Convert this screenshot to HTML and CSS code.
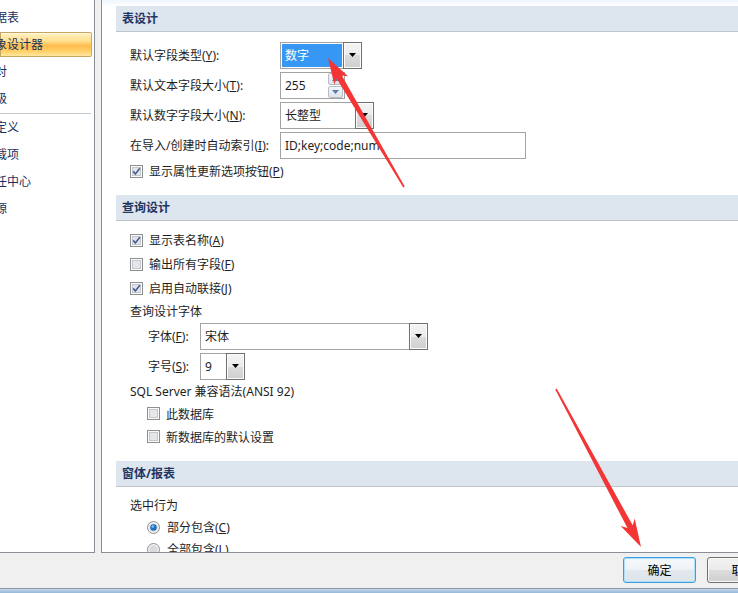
FILE: index.html
```html
<!DOCTYPE html>
<html lang="zh-CN">
<head>
    <meta charset="UTF-8">
    <title>Access 选项 - 对象设计器</title>
    <link rel="stylesheet" href="styles.css">
</head>
<body>
    <div class="main">
        <ul class="nav">
            <li>数据表</li>
            <li class="active">对象设计器</li>
            <li>校对</li>
            <li>高级</li>
            <li class="sep"></li>
            <li>自定义</li>
            <li>加载项</li>
            <li>信任中心</li>
            <li>资源</li>
        </ul>

        <div class="panel">
            <!-- 表设计 -->
            <div class="section-title">表设计</div>
            <div class="section-body sec-table">
                <div class="row">
                    <span class="lbl">默认字段类型(<u>Y</u>):</span>
                    <div class="combo w-type">
                        <span class="val selected">数字</span>
                        <span class="drop"><svg width="7" height="4" viewBox="0 0 7 4"><polygon points="0,0 7,0 3.5,4" fill="#000"/></svg></span>
                    </div>
                </div>
                <div class="row">
                    <span class="lbl">默认文本字段大小(<u>T</u>):</span>
                    <div class="combo w-spin">
                        <span class="val">255</span>
                        <span class="spin">
                            <span class="spin-btn"><svg width="7" height="4" viewBox="0 0 7 4"><polygon points="0,4 7,4 3.5,0" fill="#5b78b0"/></svg></span>
                            <span class="spin-btn"><svg width="7" height="4" viewBox="0 0 7 4"><polygon points="0,0 7,0 3.5,4" fill="#5b78b0"/></svg></span>
                        </span>
                    </div>
                </div>
                <div class="row">
                    <span class="lbl">默认数字字段大小(<u>N</u>):</span>
                    <div class="combo w-num">
                        <span class="val">长整型</span>
                        <span class="drop"><svg width="7" height="4" viewBox="0 0 7 4"><polygon points="0,0 7,0 3.5,4" fill="#000"/></svg></span>
                    </div>
                </div>
                <div class="row">
                    <span class="lbl">在导入/创建时自动索引(<u>I</u>):</span>
                    <div class="combo w-index">
                        <span class="val">ID;key;code;num</span>
                    </div>
                </div>
                <div class="row check-row">
                    <svg class="cb" viewBox="0 0 13 13"><rect x="0.5" y="0.5" width="12" height="12" fill="#fafafa" stroke="#8e8f8f"/><rect x="2.5" y="2.5" width="8" height="8" fill="#e4e6ea" stroke="#c3c7ce"/><path d="M3.2 6.4l2.2 2.6 4.4-5.8" fill="none" stroke="#4b5f93" stroke-width="1.7"/></svg>
                    <span>显示属性更新选项按钮(<u>P</u>)</span>
                </div>
            </div>

            <!-- 查询设计 -->
            <div class="section-title">查询设计</div>
            <div class="section-body sec-query">
                <div class="row check-row">
                    <svg class="cb" viewBox="0 0 13 13"><rect x="0.5" y="0.5" width="12" height="12" fill="#fafafa" stroke="#8e8f8f"/><rect x="2.5" y="2.5" width="8" height="8" fill="#e4e6ea" stroke="#c3c7ce"/><path d="M3.2 6.4l2.2 2.6 4.4-5.8" fill="none" stroke="#4b5f93" stroke-width="1.7"/></svg>
                    <span>显示表名称(<u>A</u>)</span>
                </div>
                <div class="row check-row">
                    <svg class="cb" viewBox="0 0 13 13"><rect x="0.5" y="0.5" width="12" height="12" fill="#fafafa" stroke="#8e8f8f"/><rect x="2.5" y="2.5" width="8" height="8" fill="#e4e6ea" stroke="#c3c7ce"/></svg>
                    <span>输出所有字段(<u>F</u>)</span>
                </div>
                <div class="row check-row">
                    <svg class="cb" viewBox="0 0 13 13"><rect x="0.5" y="0.5" width="12" height="12" fill="#fafafa" stroke="#8e8f8f"/><rect x="2.5" y="2.5" width="8" height="8" fill="#e4e6ea" stroke="#c3c7ce"/><path d="M3.2 6.4l2.2 2.6 4.4-5.8" fill="none" stroke="#4b5f93" stroke-width="1.7"/></svg>
                    <span>启用自动联接(<u>J</u>)</span>
                </div>
                <div class="row caption">查询设计字体</div>
                <div class="row combo-row indent">
                    <span class="lbl short">字体(<u>F</u>):</span>
                    <div class="combo w-font">
                        <span class="val">宋体</span>
                        <span class="drop"><svg width="7" height="4" viewBox="0 0 7 4"><polygon points="0,0 7,0 3.5,4" fill="#000"/></svg></span>
                    </div>
                </div>
                <div class="row combo-row indent gap-top">
                    <span class="lbl short">字号(<u>S</u>):</span>
                    <div class="combo w-size">
                        <span class="val">9</span>
                        <span class="drop"><svg width="7" height="4" viewBox="0 0 7 4"><polygon points="0,0 7,0 3.5,4" fill="#000"/></svg></span>
                    </div>
                </div>
                <div class="row caption">SQL Server 兼容语法(ANSI 92)</div>
                <div class="row check-row sub indent">
                    <svg class="cb" viewBox="0 0 13 13"><rect x="0.5" y="0.5" width="12" height="12" fill="#fafafa" stroke="#8e8f8f"/><rect x="2.5" y="2.5" width="8" height="8" fill="#e4e6ea" stroke="#c3c7ce"/></svg>
                    <span>此数据库</span>
                </div>
                <div class="row check-row sub indent">
                    <svg class="cb" viewBox="0 0 13 13"><rect x="0.5" y="0.5" width="12" height="12" fill="#fafafa" stroke="#8e8f8f"/><rect x="2.5" y="2.5" width="8" height="8" fill="#e4e6ea" stroke="#c3c7ce"/></svg>
                    <span>新数据库的默认设置</span>
                </div>
            </div>

            <!-- 窗体/报表 -->
            <div class="section-title">窗体/报表</div>
            <div class="section-body sec-form">
                <div class="row caption">选中行为</div>
                <div class="row radio-row indent">
                    <svg class="rd" viewBox="0 0 13 13"><circle cx="6.5" cy="6.5" r="6" fill="#f2f2f2" stroke="#8e8f8f"/><circle cx="6.5" cy="6.5" r="4.2" fill="#d8dadd"/><circle cx="6.5" cy="6.5" r="3.2" fill="#1b6fc0"/><circle cx="5.8" cy="5.6" r="1.3" fill="#7cc0f0"/></svg>
                    <span>部分包含(<u>C</u>)</span>
                </div>
                <div class="row radio-row indent">
                    <svg class="rd" viewBox="0 0 13 13"><circle cx="6.5" cy="6.5" r="6" fill="#f2f2f2" stroke="#8e8f8f"/><circle cx="6.5" cy="6.5" r="4.2" fill="#d8dadd"/></svg>
                    <span>全部包含(<u>L</u>)</span>
                </div>
            </div>
        </div>
    </div>

    <div class="footer">
        <button class="btn ok">确定</button>
        <button class="btn">取消</button>
    </div>
    <div class="taskbar"></div>

    <!-- red annotation arrows drawn over the screenshot -->
    <svg class="marks" width="738" height="593" viewBox="0 0 738 593">
        <polygon fill="#f43535" points="328,58 348.1,76.3 341.8,75.4 404.7,186.6 403.3,187.4 336.6,78.4 334.3,84.5"/>
        <polygon fill="#f43535" points="641,547 620.7,526.1 627.5,528.1 555.3,389.4 556.7,388.6 632.7,525.3 634.7,518.5"/>
    </svg>
</body>
</html>
```

FILE: styles.css
```css
* {
    box-sizing: border-box;
}

html, body {
    margin: 0;
    padding: 0;
}

body {
    width: 738px;
    height: 593px;
    overflow: hidden;
    position: relative;
    background: #f0f0f0;
    font-family: "Noto Sans", "Noto Sans CJK SC", sans-serif;
    font-size: 12px;
    color: #1e1e1e;
}

u {
    text-decoration: underline;
}

.main {
    display: flex;
    height: 553px;
}

/* left category list (scrolled, text cut at the left edge) */
.nav {
    width: 95px;
    flex: none;
    margin: 0;
    padding: 4px 0 0;
    list-style: none;
    background: #fff;
    border-right: 1px solid #8a8f96;
    border-bottom: 1px solid #8a8f96;
    overflow: hidden;
}

.nav li {
    height: 27px;
    line-height: 27px;
    text-indent: -17px;
    white-space: nowrap;
    color: #1b2f5c;
}

.nav li.active {
    height: 25px;
    line-height: 23px;
    margin: 1px 2px 1px 0;
    text-indent: -18px;
    border: 1px solid #c6a660;
    border-right-color: #e3a23c;
    border-radius: 0 2px 2px 0;
    background: linear-gradient(to bottom, #fff2c4 0%, #ffe08e 35%, #ffbd50 55%, #ffd06a 80%, #ffe7a0 100%);
    box-shadow: inset 0 1px 0 #fff8e0;
}

.nav li.sep {
    height: 2px;
    margin-right: 3px;
    border-bottom: 1px solid #c6cbd1;
}

/* right options panel */
.panel {
    flex: 1;
    margin-left: 6px;
    padding-top: 6px;
    background: linear-gradient(to bottom, #eef6fc 0, #fff 6px);
    border-left: 1px solid #8a8f96;
    border-bottom: 1px solid #8a8f96;
    overflow: hidden;
}

.section-title {
    margin-left: 14px;
    height: 26px;
    padding-left: 6px;
    line-height: 25px;
    background: #dde6ee;
    border-bottom: 1px solid #c1c5c9;
    font-weight: bold;
    color: #1f3562;
}

.section-body {
    padding-left: 28px;
}

.sec-table {
    padding-top: 8px;
    margin-bottom: 13px;
}

.sec-query {
    padding-top: 7px;
    margin-bottom: 13px;
}

.sec-form {
    padding-top: 7px;
}

.row {
    display: flex;
    align-items: center;
    height: 30px;
    white-space: nowrap;
}

.row.check-row {
    height: 24px;
}

.sec-table .check-row {
    height: 22px;
}

.row.check-row.sub {
    height: 23px;
}

.row.caption,
.row.radio-row {
    height: 22px;
}

.row.combo-row {
    height: 28px;
}

.row.gap-top {
    margin-top: 2px;
}

.row.indent {
    padding-left: 17px;
}

.row.combo-row.indent {
    padding-left: 18px;
}

.lbl {
    width: 150px;
    flex: none;
}

.lbl.short {
    width: 52px;
}

.cb,
.rd {
    width: 13px;
    height: 13px;
    flex: none;
    margin-right: 6px;
}

.rd {
    margin-right: 7px;
}

/* combo boxes and text boxes */
.combo {
    display: flex;
    height: 27px;
    flex: none;
    background: #fff;
    border: 1px solid #a3a3a3;
}

.combo .val {
    flex: 1;
    padding-left: 4px;
    line-height: 25px;
    overflow: hidden;
}

.combo .val.selected {
    margin: 1px;
    padding-left: 3px;
    line-height: 23px;
    background: #3797f5;
    color: #fff;
}

.combo .drop {
    width: 19px;
    flex: none;
    margin: -1px -1px -1px 0;
    display: flex;
    align-items: center;
    justify-content: center;
    padding-bottom: 1px;
    border: 1px solid #707070;
    background: linear-gradient(to bottom, #f4f4f4 0%, #ebebeb 50%, #dcdcdc 50%, #cfcfcf 100%);
    box-shadow: inset 0 0 0 1px #fbfbfb;
}

.combo .spin {
    width: 16px;
    flex: none;
    display: flex;
    flex-direction: column;
    gap: 1px;
    padding: 0 1px 0 0;
}

.spin-btn {
    flex: 1;
    display: flex;
    align-items: center;
    justify-content: center;
    border: 1px solid #b7bcc4;
    border-radius: 2px;
    background: linear-gradient(to bottom, #f3f6fa, #dde3ea);
}

.w-type { width: 82px; }
.w-spin { width: 65px; }
.w-num { width: 94px; }
.w-index { width: 246px; }
.w-font { width: 228px; }
.w-size { width: 45px; }

/* dialog buttons */
.footer {
    height: 35px;
    display: flex;
    justify-content: flex-end;
    gap: 11px;
    padding-top: 4px;
    margin-right: -42px;
}

.btn {
    width: 73px;
    height: 26px;
    padding: 0;
    font-family: "Noto Sans", "Noto Sans CJK SC", sans-serif;
    font-size: 12px;
    color: #000;
    border: 1px solid #707070;
    border-radius: 3px;
    background: linear-gradient(to bottom, #f2f2f2 0%, #ebebeb 50%, #dddddd 50%, #cfcfcf 100%);
    box-shadow: inset 0 0 0 1px #fafafa;
}

.btn.ok {
    border-color: #3c9ee0;
    background: linear-gradient(to bottom, #f6f9fb 0%, #eef2f5 50%, #e2e8ee 50%, #dde4ea 100%);
    box-shadow: inset 0 0 0 1px #aee0fa;
}

.taskbar {
    height: 5px;
    border-top: 1px solid #8d99a6;
    background: linear-gradient(to bottom, #c3d8ee, #97b8da);
}

.marks {
    position: absolute;
    top: 0;
    left: 0;
    pointer-events: none;
}
```
